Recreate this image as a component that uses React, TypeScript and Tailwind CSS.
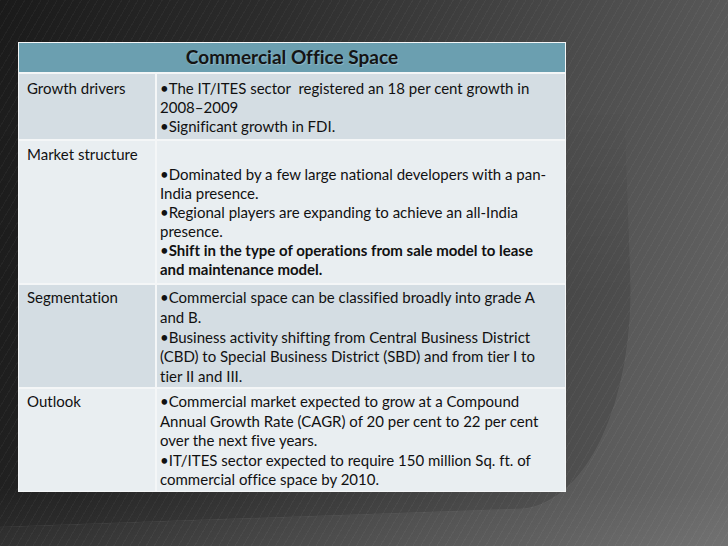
import React from "react";

const font = { fontFamily: '"Lato", "Open Sans", sans-serif' };

function Lines({ lines }: { lines: React.ReactNode[] }) {
  return (
    <>
      {lines.map((l, i) => (
        <div key={i} className="whitespace-pre">
          {l}
        </div>
      ))}
    </>
  );
}

export default function App() {
  return (
    <div
      className="relative w-[728px] h-[546px] overflow-hidden bg-[linear-gradient(110deg,#1a1a1a_0%,#2c2c2c_30%,#4c4c4c_65%,#6a6a6a_100%)] [font-variant-ligatures:none]"
      style={font}
    >
      {/* decorative swoosh */}
      <div className="absolute left-[-80px] top-[-200px] w-[707px] h-[718px] rounded-br-[120px_230px] rotate-[-2deg] bg-[rgba(0,0,0,0.12)] border-r border-b border-[rgba(255,255,255,0.08)] [mask-image:linear-gradient(180deg,transparent_0%,transparent_45%,black_70%)]" />
      <div className="absolute left-0 right-0 bottom-0 h-[60px] bg-[linear-gradient(180deg,rgba(255,255,255,0)_0%,rgba(255,255,255,0.05)_100%)]" />
      {/* hatch */}
      <div className="absolute inset-0 bg-[repeating-linear-gradient(120deg,rgba(255,255,255,0.035)_0px,rgba(255,255,255,0.035)_1px,transparent_1px,transparent_7px)]" />

      <div className="relative pt-[42px] pl-[18px]">
        <div className="grid w-[548px] grid-cols-[136px_408px] grid-rows-[29px_65px_142px_102px_102px] gap-[2px] bg-[#f4f6f7] p-[1px] text-[15px] text-[#111]">
          <div className="col-span-2 flex items-center justify-center bg-[#6b9fb0] text-[19px] font-bold text-[#141414] [text-shadow:1px_1px_1px_rgba(255,255,255,0.25)]">
            Commercial Office Space
          </div>

          <div className="bg-[#d4dde3] pl-[8px] pt-[5px] leading-[19px]">Growth drivers</div>
          <div className="bg-[#d4dde3] pl-[3px] pt-[5px] leading-[19px]">
            <Lines
              lines={[
                "•The IT/ITES sector  registered an 18 per cent growth in",
                "2008–2009",
                "•Significant growth in FDI.",
              ]}
            />
          </div>

          <div className="bg-[#e9eef1] pl-[8px] pt-[4px] leading-[19px]">Market structure</div>
          <div className="bg-[#e9eef1] pl-[3px] pt-[24px] leading-[19px]">
            <Lines
              lines={[
                "•Dominated by a few large national developers with a pan-",
                "India presence.",
                "•Regional players are expanding to achieve an all-India",
                "presence.",
                <>
                  •<span className="font-bold">Shift in the type of operations from sale model to lease</span>
                </>,
                <span className="font-bold">and maintenance model.</span>,
              ]}
            />
          </div>

          <div className="bg-[#d4dde3] pl-[8px] pt-[3px] leading-[19.75px]">Segmentation</div>
          <div className="bg-[#d4dde3] pl-[3px] pt-[3px] leading-[19.75px]">
            <Lines
              lines={[
                "•Commercial space can be classified broadly into grade A",
                "and B.",
                "•Business activity shifting from Central Business District",
                "(CBD) to Special Business District (SBD) and from tier I to",
                "tier II and III.",
              ]}
            />
          </div>

          <div className="bg-[#e9eef1] pl-[8px] pt-[3px] leading-[19.6px]">Outlook</div>
          <div className="bg-[#e9eef1] pl-[3px] pt-[3px] leading-[19.6px]">
            <Lines
              lines={[
                "•Commercial market expected to grow at a Compound",
                "Annual Growth Rate (CAGR) of 20 per cent to 22 per cent",
                "over the next five years.",
                "•IT/ITES sector expected to require 150 million Sq. ft. of",
                "commercial office space by 2010.",
              ]}
            />
          </div>
        </div>
      </div>
    </div>
  );
}
